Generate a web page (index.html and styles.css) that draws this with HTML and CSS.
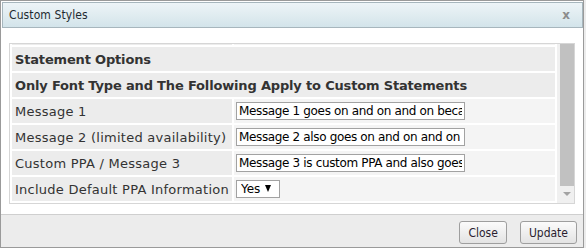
FILE: index.html
```html
<!DOCTYPE html>
<html lang="en">
<head>
    <meta charset="UTF-8">
    <meta name="viewport" content="width=device-width, initial-scale=1.0">
    <title>Custom Styles</title>
    <link rel="stylesheet" href="styles.css">
</head>
<body>
    <div class="dialog">
        <div class="titlebar">
            <span class="title">Custom Styles</span>
            <span class="close-x">x</span>
        </div>

        <div class="content">
            <div class="panel">
                <div class="rows">
                    <table class="options">
                        <tr class="sliver">
                            <td class="label"></td>
                            <td class="value"></td>
                        </tr>
                        <tr>
                            <th colspan="2">Statement Options</th>
                        </tr>
                        <tr>
                            <th colspan="2">Only Font Type and The Following Apply to Custom Statements</th>
                        </tr>
                        <tr>
                            <td class="label">Message 1</td>
                            <td class="value"><input type="text" value="Message 1 goes on and on and on because it is long"></td>
                        </tr>
                        <tr>
                            <td class="label">Message 2 (limited availability)</td>
                            <td class="value"><input type="text" value="Message 2 also goes on and on and on and on"></td>
                        </tr>
                        <tr>
                            <td class="label">Custom PPA / Message 3</td>
                            <td class="value"><input type="text" value="Message 3 is custom PPA and also goes on"></td>
                        </tr>
                        <tr>
                            <td class="label">Include Default PPA Information</td>
                            <td class="value">
                                <span class="select-wrap">
                                    <select>
                                        <option>Yes</option>
                                        <option>No</option>
                                    </select>
                                </span>
                            </td>
                        </tr>
                    </table>
                </div>
                <div class="scroll">
                    <div class="thumb"></div>
                    <div class="arrow"></div>
                </div>
            </div>
        </div>

        <div class="footer">
            <button>Close</button>
            <button>Update</button>
        </div>
    </div>
</body>
</html>
```

FILE: styles.css
```css
body {
    margin: 0;
    background-color: #ececec;
    font-family: "DejaVu Sans", Verdana, sans-serif;
}

.dialog {
    width: 582px;
    height: 246px;
    border: 1px solid #9a9a9a;
    background: white;
    display: flex;
    flex-direction: column;
}

/* Title bar */
.titlebar {
    margin: 1px 0 0 1px;
    height: 24px;
    border: 1px solid #a7b6bd;
    background: linear-gradient(#edf4f7, #d3e4ea);
    display: flex;
    align-items: center;
    justify-content: space-between;
    padding: 0 12px 0 6px;
}

.title {
    font-family: "DejaVu Sans Condensed", Tahoma, sans-serif;
    font-size: 12px;
    letter-spacing: 0.1px;
    color: #1e2a30;
}

.close-x {
    font-family: "DejaVu Sans", sans-serif;
    font-size: 12px;
    font-weight: bold;
    color: #8c8c8c;
}

/* Options panel */
.content {
    padding: 15px 8px 0 8px;
}

.panel {
    height: 159px;
    border: 1px solid #d6d6d6;
    display: flex;
}

.rows {
    flex: 1;
    overflow: hidden;
}

.options {
    width: 100%;
    border-spacing: 2px;
    margin-top: -4px;
    font-size: 13px;
    color: #333;
}

.options th,
.options td {
    height: 24px;
    padding: 0 3px;
    text-align: left;
    white-space: nowrap;
}

.options th {
    background-color: #ececec;
    font-weight: bold;
    letter-spacing: -0.17px;
    color: #333;
}

.options td.label {
    letter-spacing: 0.25px;
}

.options .sliver td {
    height: 3px;
    padding: 0;
}

.label {
    width: 214px;
    background-color: #ececec;
}

.value {
    background-color: #f4f4f4;
}

.options td.value {
    padding: 0 2px;
}

input[type="text"] {
    display: block;
    width: 229px;
    height: 18px;
    box-sizing: border-box;
    border: 1px solid #a2a2a2;
    padding: 0 2px;
    font-family: "DejaVu Sans", Verdana, sans-serif;
    font-size: 12px;
    letter-spacing: -0.35px;
    color: #000;
    background: white;
}

.select-wrap {
    position: relative;
    display: inline-block;
}

.select-wrap select {
    appearance: none;
    -webkit-appearance: none;
    width: 44px;
    height: 18px;
    border: 1px solid #a2a2a2;
    border-radius: 0;
    padding: 0 0 0 4px;
    background: white;
    font-family: "DejaVu Sans", Verdana, sans-serif;
    font-size: 12px;
    color: #000;
}

.select-wrap:after {
    content: "";
    position: absolute;
    right: 9px;
    top: 5px;
    border-left: 3px solid transparent;
    border-right: 3px solid transparent;
    border-top: 7px solid #000;
}

/* Fake scroll bar */
.scroll {
    width: 14px;
    padding-left: 3px;
    background-color: #f0f0f0;
    display: flex;
    flex-direction: column;
    align-items: stretch;
}

.thumb {
    height: 142px;
    background-color: #c1c1c1;
}

.arrow {
    align-self: center;
    margin-top: 6px;
    border-left: 4px solid transparent;
    border-right: 4px solid transparent;
    border-top: 4px solid #a3a3a3;
}

/* Footer */
.footer {
    margin-top: auto;
    height: 33px;
    border-top: 1px solid #cfcfcf;
    background-color: #ececec;
    display: flex;
    justify-content: flex-end;
    align-items: flex-start;
    gap: 13px;
    padding: 6px 6px 0 0;
    box-sizing: border-box;
}

button {
    height: 23px;
    padding: 0 8px;
    border: 1px solid #9e9e9e;
    border-radius: 3px;
    background: linear-gradient(#fbfbfb, #e3e3e3);
    font-family: "DejaVu Sans Condensed", Tahoma, sans-serif;
    font-size: 12px;
    color: #2a1e30;
    cursor: pointer;
}
```
